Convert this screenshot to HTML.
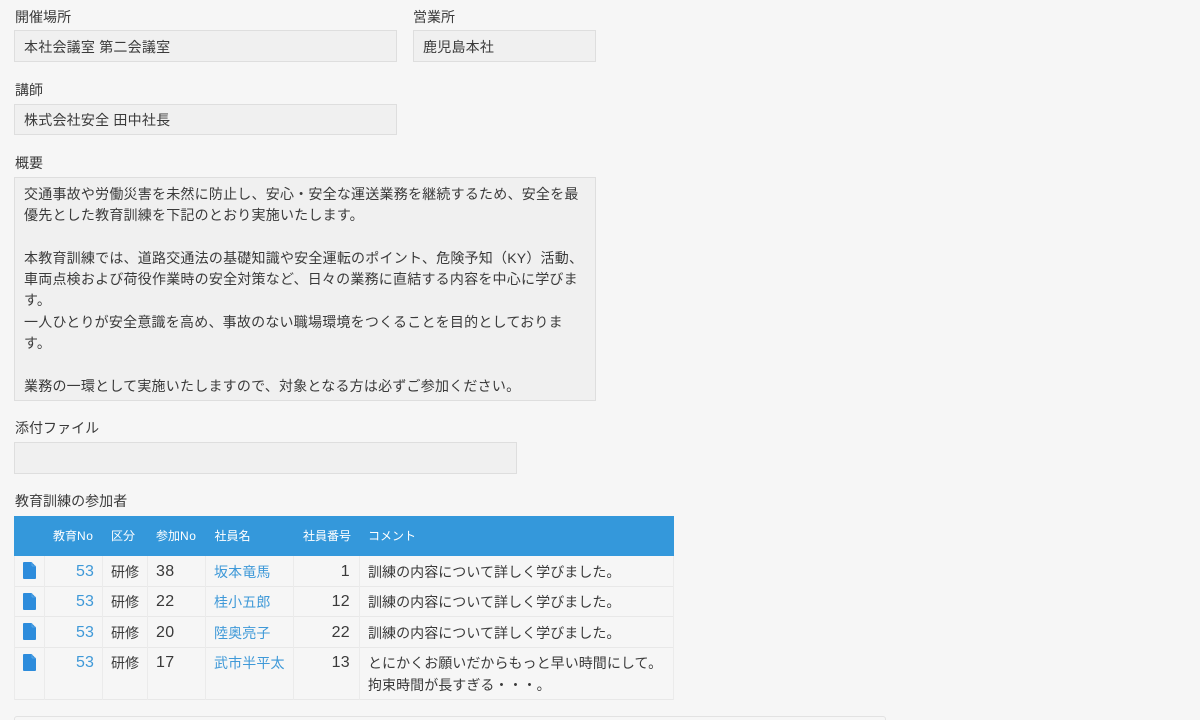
<!DOCTYPE html>
<html lang="ja"><head><meta charset="utf-8"><style>
html,body{margin:0;padding:0;height:720px;overflow:hidden}
body{width:1200px;height:720px;overflow:hidden;position:relative;background:#f6f6f6;color:#3a3a3a;font:14px/21px "Liberation Sans","Noto Sans CJK JP",sans-serif}
.a{position:absolute;white-space:nowrap}
.box{position:absolute;box-sizing:border-box;background:#f0f0f0;border:1px solid #dedede;padding:0 9px;letter-spacing:.22px}
.l{position:absolute;left:15px;white-space:nowrap;line-height:20px;letter-spacing:.03px}
.h{position:absolute;top:516px;left:14px;width:660px;height:40px;background:#3498db}
.h span{position:absolute;top:10px;color:#fff;font-size:12px;line-height:20px;white-space:nowrap}
.h i{font-style:normal;letter-spacing:.6px}
.hl{position:absolute;background:#e8e8e8;height:1px;left:14px;width:660px}
.vl{position:absolute;background:#ebebeb;width:1px;top:556px;height:144px}
.c{position:absolute;white-space:nowrap;line-height:20px;letter-spacing:.05px}
.n{font-size:16px;letter-spacing:.3px}.r{text-align:right}.b{color:#3f99d8;letter-spacing:.12px}
</style></head><body>
<div class="l" style="top:7px">開催場所</div>
<div class="l" style="top:7px;left:413px">営業所</div>
<div class="box" style="left:14px;top:30px;width:382.5px;height:32px;line-height:32px">本社会議室 第二会議室</div>
<div class="box" style="left:413px;top:30px;width:183px;height:32px;line-height:32px">鹿児島本社</div>
<div class="l" style="top:80px">講師</div>
<div class="box" style="left:14px;top:104px;width:382.5px;height:31px;line-height:30px">株式会社安全 田中社長</div>
<div class="l" style="top:153px">概要</div>
<div class="box" style="left:14px;top:177px;width:582px;height:224px;padding-top:5.5px;line-height:21.36px;white-space:nowrap;overflow:hidden">交通事故や労働災害を未然に防止し、安心・安全な運送業務を継続するため、安全を最<br>優先とした教育訓練を下記のとおり実施いたします。<br><br>本教育訓練では、道路交通法の基礎知識や安全運転のポイント、危険予知（KY）活動、<br>車両点検および荷役作業時の安全対策など、日々の業務に直結する内容を中心に学びま<br>す。<br>一人ひとりが安全意識を高め、事故のない職場環境をつくることを目的としておりま<br>す。<br><br>業務の一環として実施いたしますので、対象となる方は必ずご参加ください。</div>
<div class="l" style="top:418px">添付ファイル</div>
<div class="box" style="left:14px;top:442px;width:503px;height:32px"></div>
<div class="l" style="top:491px">教育訓練の参加者</div>
<div class="h">
<span style="left:39px">教育<i>No</i></span><span style="left:97px">区分</span><span style="left:142px">参加<i>No</i></span><span style="left:200.5px">社員名</span><span style="left:289px">社員番号</span><span style="left:354px">コメント</span>
</div>
<div class="hl" style="top:586px"></div><div class="hl" style="top:616px"></div><div class="hl" style="top:647px"></div><div class="hl" style="top:699px"></div>
<div class="vl" style="left:14px"></div><div class="vl" style="left:44px"></div><div class="vl" style="left:102px"></div><div class="vl" style="left:147px"></div><div class="vl" style="left:205px"></div><div class="vl" style="left:293px"></div><div class="vl" style="left:359px"></div><div class="vl" style="left:673px"></div>
<svg class="a" style="left:23px;top:562px" width="13" height="17" viewBox="0 0 13 17"><path d="M0 1Q0 0 1 0H8.5L13 4.5V16Q13 17 12 17H1Q0 17 0 16Z" fill="#2d8cdc"/><path d="M9 0V4H13" fill="none" stroke="#7fbcec" stroke-width=".5"/></svg>
<svg class="a" style="left:23px;top:593px" width="13" height="17" viewBox="0 0 13 17"><path d="M0 1Q0 0 1 0H8.5L13 4.5V16Q13 17 12 17H1Q0 17 0 16Z" fill="#2d8cdc"/><path d="M9 0V4H13" fill="none" stroke="#7fbcec" stroke-width=".5"/></svg>
<svg class="a" style="left:23px;top:623px" width="13" height="17" viewBox="0 0 13 17"><path d="M0 1Q0 0 1 0H8.5L13 4.5V16Q13 17 12 17H1Q0 17 0 16Z" fill="#2d8cdc"/><path d="M9 0V4H13" fill="none" stroke="#7fbcec" stroke-width=".5"/></svg>
<svg class="a" style="left:23px;top:654px" width="13" height="17" viewBox="0 0 13 17"><path d="M0 1Q0 0 1 0H8.5L13 4.5V16Q13 17 12 17H1Q0 17 0 16Z" fill="#2d8cdc"/><path d="M9 0V4H13" fill="none" stroke="#7fbcec" stroke-width=".5"/></svg>
<div class="c n b r" style="left:44px;width:50px;top:562px">53</div><div class="c" style="left:111px;top:562px">研修</div><div class="c n" style="left:156px;top:562px">38</div><div class="c b" style="left:214px;top:562px">坂本竜馬</div><div class="c n r" style="left:293px;width:57px;top:562px">1</div><div class="c" style="left:368px;top:562px">訓練の内容について詳しく学びました。</div>
<div class="c n b r" style="left:44px;width:50px;top:592px">53</div><div class="c" style="left:111px;top:592px">研修</div><div class="c n" style="left:156px;top:592px">22</div><div class="c b" style="left:214px;top:592px">桂小五郎</div><div class="c n r" style="left:293px;width:57px;top:592px">12</div><div class="c" style="left:368px;top:592px">訓練の内容について詳しく学びました。</div>
<div class="c n b r" style="left:44px;width:50px;top:623px">53</div><div class="c" style="left:111px;top:623px">研修</div><div class="c n" style="left:156px;top:623px">20</div><div class="c b" style="left:214px;top:623px">陸奥亮子</div><div class="c n r" style="left:293px;width:57px;top:623px">22</div><div class="c" style="left:368px;top:623px">訓練の内容について詳しく学びました。</div>
<div class="c n b r" style="left:44px;width:50px;top:653px">53</div><div class="c" style="left:111px;top:653px">研修</div><div class="c n" style="left:156px;top:653px">17</div><div class="c b" style="left:214px;top:653px">武市半平太</div><div class="c n r" style="left:293px;width:57px;top:653px">13</div><div class="c" style="left:368px;top:653px;line-height:21.5px">とにかくお願いだからもっと早い時間にして。<br>拘束時間が長すぎる・・・。</div>
<div style="position:absolute;left:14px;top:716px;width:872px;height:20px;box-sizing:border-box;border:1px solid #e2e2e2;border-radius:3px"></div>
</body></html>
